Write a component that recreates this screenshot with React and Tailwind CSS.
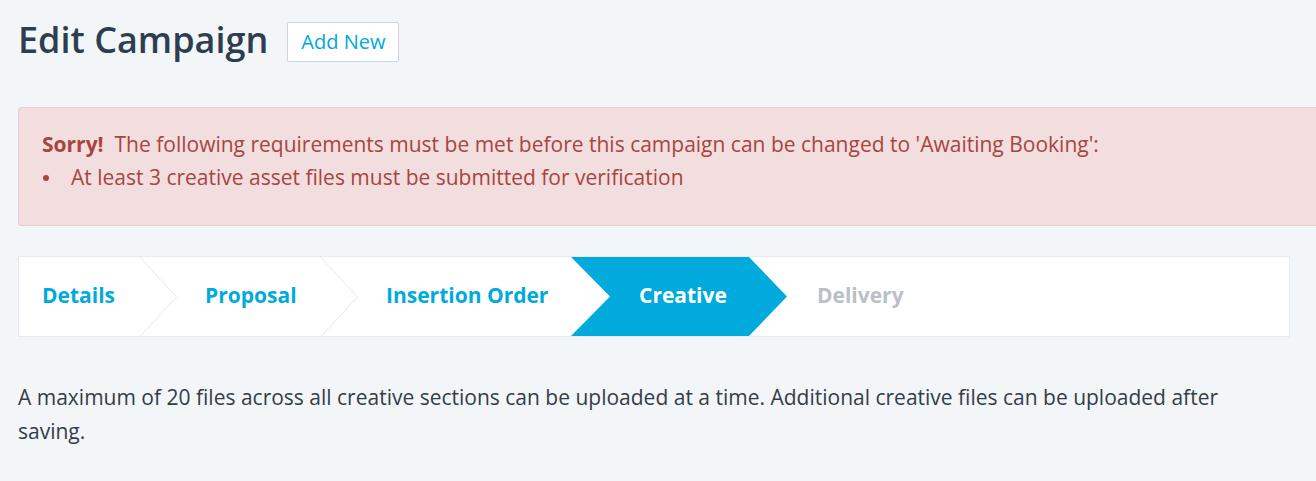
import React from "react";

const font = { fontFamily: '"Open Sans", "Noto Sans", sans-serif' };

function Sep() {
  return (
    <svg width="38" height="80" viewBox="0 0 38 80" className="shrink-0 block">
      <polyline points="0.5,0 37.5,40 0.5,80" fill="none" stroke="#e4e9ee" strokeWidth="1" />
    </svg>
  );
}

export default function App() {
  return (
    <div className="w-[1316px] h-[481px] overflow-hidden bg-[#f3f6f9] text-[21px]" style={font}>
      <div className="pl-[18px]">
        <div className="flex items-center pt-[22px] h-[62px]">
          <h1 className="text-[36px] leading-[40px] text-[#2d3e50] font-semibold mt-[-4px]">Edit Campaign</h1>
          <button className="ml-[19px] h-[40px] px-[13px] bg-white border border-[#c8d7e1] rounded-[2px] text-[20px] text-[#00aadc] leading-none">
            Add New
          </button>
        </div>

        <div className="mt-[45px] w-[1320px] bg-[#f2dede] border border-[#ebccd1] rounded-[3px] text-[#a94442] pl-[23px] pt-[20px] pb-[31px] leading-[33px]">
          <p>
            <span className="font-bold">Sorry!</span>&nbsp; The following requirements must be met before this campaign can be changed to 'Awaiting Booking':
          </p>
          <ul>
            <li className="flex items-center">
              <span className="w-[29px] shrink-0 flex items-center">
                <span className="ml-[1px] w-[6px] h-[6px] rounded-full bg-[#a94442]"></span>
              </span>
              <span>At least 3 creative asset files must be submitted for verification</span>
            </li>
          </ul>
        </div>

        <div className="mt-[30px] w-[1272px] h-[81px] bg-white border border-[#e6ebef] flex items-stretch font-bold text-[21px]">
          <div className="w-[120px] pl-[23px] pb-[2px] flex items-center text-[#00aadc]">Details</div>
          <Sep />
          <div className="w-[143px] pl-[28px] pb-[2px] flex items-center text-[#00aadc]">Proposal</div>
          <Sep />
          <div className="w-[213px] pl-[28px] pb-[2px] flex items-center text-[#00aadc]">Insertion Order</div>
          <div className="w-[216px] pl-[68px] pb-[2px] flex items-center text-white bg-[#00aadc] [clip-path:polygon(0_0,178px_0,100%_50%,178px_100%,0_100%,39px_50%)]">
            Creative
          </div>
          <div className="pl-[30px] pb-[2px] flex items-center text-[#b9c0c7]">Delivery</div>
        </div>

        <p className="mt-[43px] w-[1272px] leading-[34px] text-[#333d47]">
          A maximum of 20 files across all creative sections can be uploaded at a time. Additional creative files can be uploaded after saving.
        </p>
      </div>
    </div>
  );
}
